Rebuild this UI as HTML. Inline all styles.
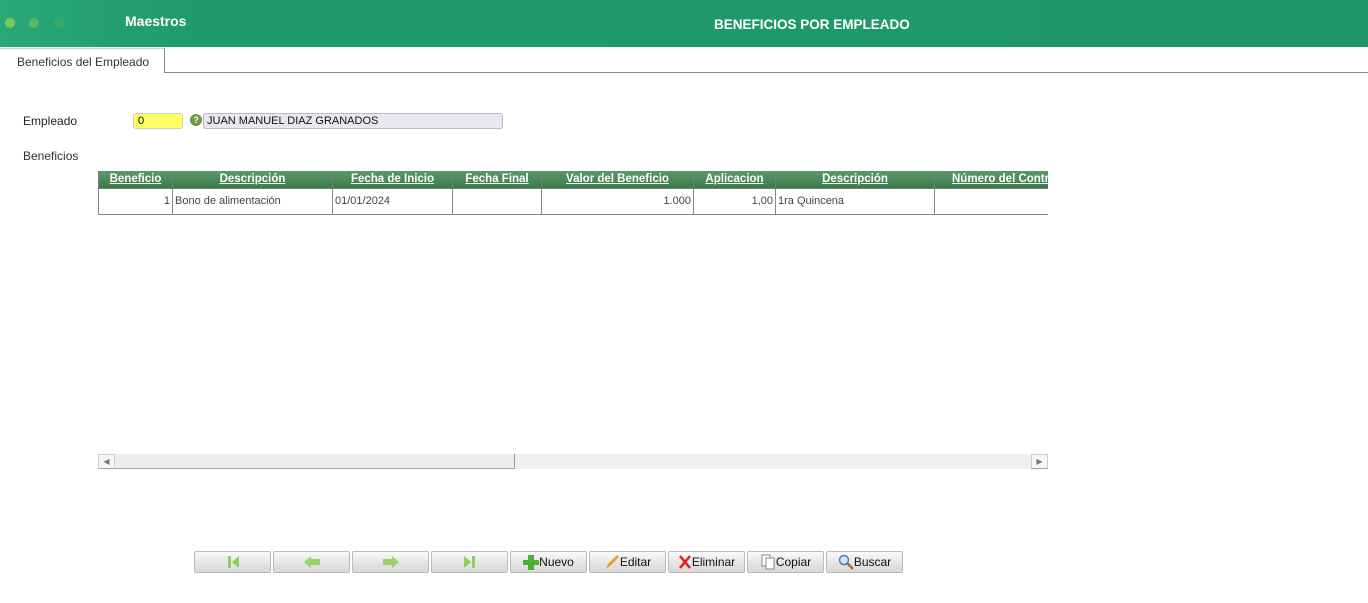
<!DOCTYPE html>
<html><head><meta charset="utf-8"><style>
*{margin:0;padding:0;box-sizing:border-box}
body{width:1368px;height:603px;background:#fff;font-family:"Liberation Sans",sans-serif;position:relative;overflow:hidden}
.hdr{position:absolute;left:0;top:0;width:1368px;height:47px;background:linear-gradient(90deg,#2aa877 0,#1f9a6a 200px,#1e9868 100%)}
.dot{position:absolute;top:18px;width:10px;height:10px;border-radius:50%}
.hdr .t1{position:absolute;left:125px;top:13px;color:#fff;font-weight:bold;font-size:14px}
.hdr .t2{position:absolute;left:714px;top:17px;color:#fff;font-weight:bold;font-size:13.5px}
.tabline{position:absolute;left:164px;top:72px;width:1204px;height:1px;background:#888}
.tab{position:absolute;left:0;top:48px;width:165px;height:25px;border-right:1px solid #888;border-top:1px solid #ccc;font-size:12px;color:#333;padding:6px 0 0 17px}
.lbl{position:absolute;font-size:12px;color:#222}
.inp{position:absolute;left:133px;top:113px;width:50px;height:16px;background:#ffff66;border:1px solid #ccc;border-radius:3px;font-size:11px;padding:1px 4px}
.q{position:absolute;left:190px;top:114px;width:12px;height:12px;border-radius:50%;background:#6a9a4a;color:#fff;font-size:9px;font-weight:bold;text-align:center;line-height:12px}
.name{position:absolute;left:203px;top:113px;width:300px;height:16px;background:#e8e8f0;border:1px solid #bbb;border-radius:3px;font-size:11px;padding:1px 3px;color:#111}
table{position:absolute;border-collapse:collapse;font-family:"Liberation Sans",sans-serif;font-size:11px;table-layout:fixed;width:996px}
th{height:17px;background:linear-gradient(#5a9a6a,#3c7a4c);color:#fff;text-decoration:underline;font-weight:bold;border:1px solid #7a7a7a;border-top:none;padding:0;white-space:nowrap;overflow:hidden;font-size:11.5px}
td{height:26px;border:1px solid #888;color:#444;padding:0 2px;white-space:nowrap;overflow:hidden}
.wrap{position:absolute;left:98px;top:171px;width:950px;height:45px;overflow:hidden}
.wrap table{left:0;top:0}
.sb{position:absolute;left:98px;top:454px;width:950px;height:15px;background:#f0f0f0}
.sb .th{position:absolute;left:17px;top:0;width:400px;height:15px;border-right:1px solid #999;border-bottom:1px solid #9aaa88;background:#eee}
.sb .a{position:absolute;top:0;width:17px;height:15px;border:1px solid #ccc;border-bottom-color:#9aaa88;background:#f6f6f6;font-size:8px;color:#777;text-align:center;line-height:13px}
.btn{position:absolute;top:551px;width:77px;height:22px;border:1px solid #bbb;border-radius:2px;background:linear-gradient(#fafafa,#e4e4e4 55%,#d8d8d8);font-family:"Liberation Sans",sans-serif;font-size:12px;color:#111;display:flex;align-items:center;justify-content:center}
</style></head><body>
<div class="hdr">
<div class="dot" style="left:5px;background:#7cc85a"></div>
<div class="dot" style="left:29px;background:#5cb868"></div>
<div class="dot" style="left:54px;background:#3aa86a"></div>
<div class="t1">Maestros</div><div class="t2">BENEFICIOS POR EMPLEADO</div>
</div>
<div class="tab">Beneficios del Empleado</div><div class="tabline"></div>
<div class="lbl" style="left:23px;top:114px">Empleado</div>
<div class="inp">0</div><div class="q">?</div><div class="name">JUAN MANUEL DIAZ GRANADOS</div>
<div class="lbl" style="left:23px;top:149px;color:#333">Beneficios</div>
<div class="wrap"><table>
<colgroup><col style="width:74px"><col style="width:160px"><col style="width:120px"><col style="width:89px"><col style="width:152px"><col style="width:82px"><col style="width:159px"><col style="width:160px"></colgroup>
<tr><th>Beneficio</th><th>Descripción</th><th>Fecha de Inicio</th><th>Fecha Final</th><th>Valor del Beneficio</th><th>Aplicacion</th><th>Descripción</th><th style="text-align:left;padding-left:17px">Número del Contrato</th></tr>
<tr><td style="text-align:right">1</td><td>Bono de alimentación</td><td>01/01/2024</td><td></td><td style="text-align:right">1.000</td><td style="text-align:right">1,00</td><td>1ra Quincena</td><td></td></tr>
</table></div>
<div class="sb"><div class="a" style="left:0">◀</div><div class="th"></div><div class="a" style="right:0">▶</div></div>
<div class="btn" style="left:194px"><svg width="16" height="16"><rect x="3" y="2" width="3" height="12" fill="#8cd060"/><path d="M14 2 L7 8 L14 14Z" fill="#8cd060"/></svg></div>
<div class="btn" style="left:273px"><svg width="18" height="14"><path d="M1 7 L8 1 V4 H17 V10 H8 V13Z" fill="#9ad468"/></svg></div>
<div class="btn" style="left:352px"><svg width="18" height="14"><path d="M17 7 L10 1 V4 H1 V10 H10 V13Z" fill="#9ad468"/></svg></div>
<div class="btn" style="left:431px"><svg width="16" height="16"><path d="M2 2 L9 8 L2 14Z" fill="#8cd060"/><rect x="10" y="2" width="3" height="12" fill="#8cd060"/></svg></div>
<div class="btn" style="left:510px"><svg width="16" height="16"><path d="M5 1h6v5h5v5h-5v5h-6v-5h-5v-5h5z" fill="#4cb030"/></svg>Nuevo</div>
<div class="btn" style="left:589px"><svg width="16" height="16"><path d="M2 15 L4 10 L13 1 L15 3 L6 12Z" fill="#e8a030"/></svg>Editar</div>
<div class="btn" style="left:668px"><svg width="14" height="16"><path d="M2 2 L12 14 M12 2 L2 14" stroke="#e02020" stroke-width="2.5"/></svg>Eliminar</div>
<div class="btn" style="left:747px"><svg width="16" height="16"><rect x="2" y="1" width="8" height="11" fill="#fff" stroke="#888"/><rect x="6" y="4" width="8" height="11" fill="#fff" stroke="#888"/></svg>Copiar</div>
<div class="btn" style="left:826px"><svg width="16" height="16"><circle cx="6" cy="6" r="4.5" fill="#cfe8ff" stroke="#4a7ab0" stroke-width="1.5"/><path d="M9 9 L15 15" stroke="#a07030" stroke-width="2.5"/></svg>Buscar</div>
</body></html>
